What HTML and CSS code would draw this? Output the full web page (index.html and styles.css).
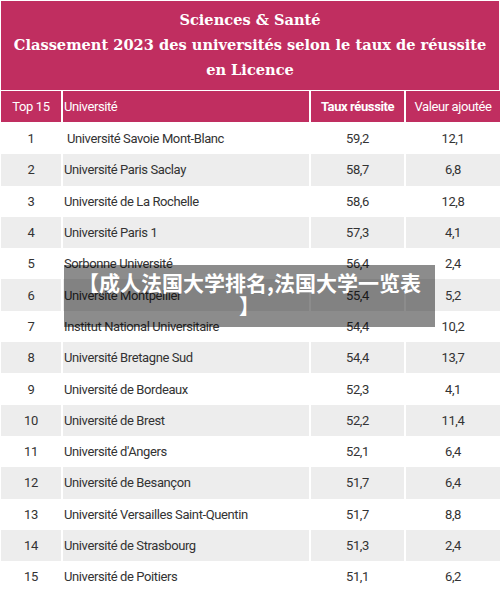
FILE: index.html
```html
<!DOCTYPE html>
<html>
<head>
    <title>Sciences &amp; Santé - Classement 2023</title>
    <meta name="viewport" content="width=device-width, initial-scale=1.0">
    <link rel="stylesheet" href="styles.css">
</head>
<body>
    <div class="sheet">
        <!-- Title block -->
        <div class="title">
            Sciences &amp; Santé<br>
            Classement 2023 des universités selon le taux de réussite<br>
            en Licence
        </div>

        <div class="row head">
            <div class="cell num">Top 15</div>
            <div class="cell name">Université</div>
            <div class="cell val bold">Taux réussite</div>
            <div class="cell val">Valeur ajoutée</div>
        </div>

        <div class="row">
            <div class="cell num">1</div>
            <div class="cell name first">Université Savoie Mont-Blanc</div>
            <div class="cell val">59,2</div>
            <div class="cell val">12,1</div>
        </div>
        <div class="row alt">
            <div class="cell num">2</div>
            <div class="cell name">Université Paris Saclay</div>
            <div class="cell val">58,7</div>
            <div class="cell val">6,8</div>
        </div>
        <div class="row">
            <div class="cell num">3</div>
            <div class="cell name">Université de La Rochelle</div>
            <div class="cell val">58,6</div>
            <div class="cell val">12,8</div>
        </div>
        <div class="row alt">
            <div class="cell num">4</div>
            <div class="cell name">Université Paris 1</div>
            <div class="cell val">57,3</div>
            <div class="cell val">4,1</div>
        </div>
        <div class="row">
            <div class="cell num">5</div>
            <div class="cell name">Sorbonne Université</div>
            <div class="cell val">56,4</div>
            <div class="cell val">2,4</div>
        </div>
        <div class="row alt">
            <div class="cell num">6</div>
            <div class="cell name">Université Montpellier</div>
            <div class="cell val">55,4</div>
            <div class="cell val">5,2</div>
        </div>
        <div class="row">
            <div class="cell num">7</div>
            <div class="cell name">Institut National Universitaire</div>
            <div class="cell val">54,4</div>
            <div class="cell val">10,2</div>
        </div>
        <div class="row alt">
            <div class="cell num">8</div>
            <div class="cell name">Université Bretagne Sud</div>
            <div class="cell val">54,4</div>
            <div class="cell val">13,7</div>
        </div>
        <div class="row">
            <div class="cell num">9</div>
            <div class="cell name">Université de Bordeaux</div>
            <div class="cell val">52,3</div>
            <div class="cell val">4,1</div>
        </div>
        <div class="row alt">
            <div class="cell num">10</div>
            <div class="cell name">Université de Brest</div>
            <div class="cell val">52,2</div>
            <div class="cell val">11,4</div>
        </div>
        <div class="row">
            <div class="cell num">11</div>
            <div class="cell name">Université d'Angers</div>
            <div class="cell val">52,1</div>
            <div class="cell val">6,4</div>
        </div>
        <div class="row alt">
            <div class="cell num">12</div>
            <div class="cell name">Université de Besançon</div>
            <div class="cell val">51,7</div>
            <div class="cell val">6,4</div>
        </div>
        <div class="row">
            <div class="cell num">13</div>
            <div class="cell name">Université Versailles Saint-Quentin</div>
            <div class="cell val">51,7</div>
            <div class="cell val">8,8</div>
        </div>
        <div class="row alt">
            <div class="cell num">14</div>
            <div class="cell name">Université de Strasbourg</div>
            <div class="cell val">51,3</div>
            <div class="cell val">2,4</div>
        </div>
        <div class="row">
            <div class="cell num">15</div>
            <div class="cell name">Université de Poitiers</div>
            <div class="cell val">51,1</div>
            <div class="cell val">6,2</div>
        </div>
    </div>

    <!-- Caption over the picture -->
    <div class="caption">【成人法国大学排名,法国大学一览表】</div>
</body>
</html>
```

FILE: styles.css
```css
body {
    margin: 0;
    background-color: #fff;
    font-family: "Roboto", "Liberation Sans", sans-serif;
    color: #333;
}

.sheet {
    padding: 1px;
}

.title {
    height: 89px;
    box-sizing: border-box;
    padding-top: 6px;
    background-color: #c02e60;
    color: #fff;
    font-family: "DejaVu Serif", "Liberation Serif", serif;
    font-weight: bold;
    font-size: 14.6px;
    line-height: 25px;
    text-align: center;
    margin-bottom: 1px;
}

.row {
    display: grid;
    grid-template-columns: 60px 246px 93px 94px;
    column-gap: 2px;
    height: 31.3px;
}

.cell {
    display: flex;
    align-items: center;
    font-size: 13px;
    letter-spacing: -0.4px;
}

.num,
.val {
    justify-content: center;
}

.name {
    padding-left: 1px;
}

.name.first {
    padding-left: 4px;
}

.bold {
    font-weight: bold;
}

.head {
    height: 31px;
    margin-bottom: 1px;
}

.head .cell {
    background-color: #c02e60;
    color: #fff;
}

.row.alt .cell {
    background-color: #ededed;
}

.caption {
    position: absolute;
    top: 265px;
    left: 64px;
    width: 371px;
    height: 62px;
    box-sizing: border-box;
    padding: 6px 12px 0;
    background-color: rgba(0, 0, 0, 0.45);
    color: #fff;
    font-family: "Noto Sans CJK SC", sans-serif;
    font-weight: bold;
    font-size: 21px;
    line-height: 23px;
    text-align: center;
    line-break: anywhere;
}
```
